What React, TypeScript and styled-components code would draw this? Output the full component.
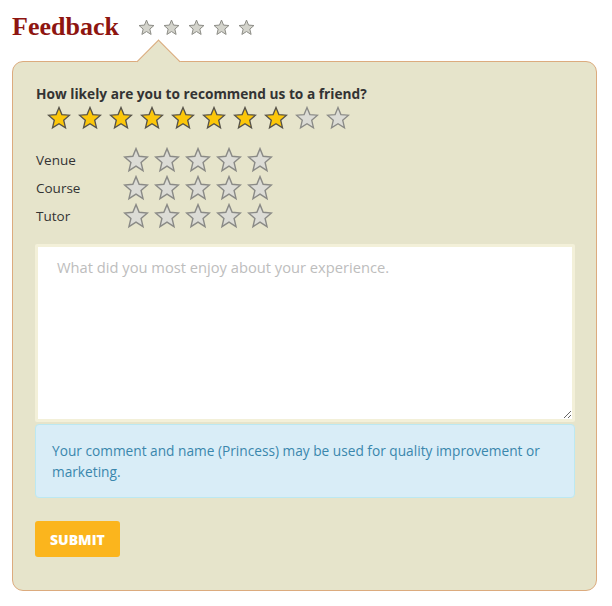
import React from "react";
import styled, { createGlobalStyle } from "styled-components";

const Global = createGlobalStyle`
  html, body { margin: 0; padding: 0; background: #ffffff; }
  body { font-family: "Open Sans", "Liberation Sans", sans-serif; color: #333; }
  * { box-sizing: border-box; }
`;

const Page = styled.div`
  width: 612px;
  padding: 8px 15px 0 12px;
`;

const Header = styled.div`
  display: flex;
  align-items: center;
  height: 38px;
  gap: 19px;
`;

const Title = styled.h1`
  margin: 0;
  font-family: "Liberation Serif", "DejaVu Serif", serif;
  font-weight: 700;
  font-size: 26px;
  color: #8e1510;
  line-height: 38px;
`;

const StarRow = styled.div<{ $gap: number; $pad?: number }>`
  display: flex;
  align-items: center;
  gap: ${(p) => p.$gap}px;
  padding-left: ${(p) => p.$pad ?? 0}px;
`;

const Panel = styled.div`
  position: relative;
  margin-top: 15px;
  background: #e6e4cb;
  border: 1px solid #dcab7e;
  border-radius: 11px;
  padding: 23px 21px 33px 22px;
  &::before {
    content: "";
    position: absolute;
    left: 130px;
    top: -16px;
    width: 30px;
    height: 30px;
    background: #e6e4cb;
    border-top: 1px solid #dcab7e;
    border-left: 1px solid #dcab7e;
    transform: rotate(45deg);
  }
`;

const Question = styled.div`
  font-weight: 700;
  font-size: 13.7px;
  line-height: 18px;
  color: #333;
  padding-left: 1px;
`;

const BigStars = styled(StarRow)`
  margin-top: 3px;
  height: 24px;
`;

const SubRatings = styled.div`
  margin-top: 16px;
  display: flex;
  flex-direction: column;
`;

const SubRow = styled.div`
  display: flex;
  align-items: center;
  height: 28px;
`;

const Label = styled.div`
  width: 88px;
  padding-left: 1px;
  font-size: 13.5px;
  color: #333;
`;

const Comment = styled.textarea`
  display: block;
  margin-top: 14px;
  width: 100%;
  height: 178px;
  resize: vertical;
  background: #ffffff;
  border: 3px solid #f3f0d9;
  border-radius: 2px;
  padding: 10px 19px;
  font-family: "Open Sans", "Liberation Sans", sans-serif;
  font-size: 14.7px;
  line-height: 20px;
  color: #333;
  outline: none;
  &::placeholder { color: #bdbdbd; }
`;

const Notice = styled.div`
  margin-top: 2px;
  background: #d9edf7;
  border: 1px solid #bce8f1;
  border-radius: 4px;
  padding: 15px 16px 15px 16px;
  font-size: 13.7px;
  line-height: 21px;
  color: #3a87ad;
`;

const Submit = styled.button`
  margin-top: 23px;
  display: block;
  height: 36px;
  padding: 0 15px;
  background: #fbb51d;
  border: none;
  border-radius: 3px;
  color: #fff;
  font-family: "Open Sans", "Liberation Sans", sans-serif;
  font-weight: 800;
  font-size: 14px;
  cursor: pointer;
`;

type StarKind = "gold" | "gray" | "mini";

const starColors: Record<StarKind, { fill: string; stroke: string; sw: number }> = {
  gold: { fill: "#fcc70a", stroke: "#55524a", sw: 1.3 },
  gray: { fill: "#dcdcd6", stroke: "#8a8a86", sw: 1.3 },
  mini: { fill: "#d4d4cc", stroke: "#8c8c86", sw: 1.4 },
};

const Star: React.FC<{ size: number; kind: StarKind }> = ({ size, kind }) => {
  const c = starColors[kind];
  return (
    <svg width={size} height={size} viewBox="0 0 24 24" style={{ display: "block" }}>
      <polygon
        points="12,1.5 14.9,8.6 22.5,9.2 16.7,14.2 18.5,21.8 12,17.7 5.5,21.8 7.3,14.2 1.5,9.2 9.1,8.6"
        fill={c.fill}
        stroke={c.stroke}
        strokeWidth={c.sw}
        strokeLinejoin="miter"
      />
    </svg>
  );
};

const Stars: React.FC<{ count: number; filled: number; size: number; gap: number; pad?: number; kind?: StarKind }> = ({
  count,
  filled,
  size,
  gap,
  pad,
  kind,
}) => (
  <StarRow $gap={gap} $pad={pad}>
    {Array.from({ length: count }).map((_, i) => (
      <Star key={i} size={size} kind={kind ?? (i < filled ? "gold" : "gray")} />
    ))}
  </StarRow>
);

export default function App() {
  return (
    <Page>
      <Global />
      <Header>
        <Title>Feedback</Title>
        <Stars count={5} filled={0} size={17} gap={8} kind="mini" />
      </Header>
      <Panel>
        <Question>How likely are you to recommend us to a friend?</Question>
        <BigStars $gap={7} $pad={12}>
          {Array.from({ length: 10 }).map((_, i) => (
            <Star key={i} size={24} kind={i < 8 ? "gold" : "gray"} />
          ))}
        </BigStars>
        <SubRatings>
          {["Venue", "Course", "Tutor"].map((l) => (
            <SubRow key={l}>
              <Label>{l}</Label>
              <Stars count={5} filled={0} size={26} gap={5} />
            </SubRow>
          ))}
        </SubRatings>
        <Comment placeholder="What did you most enjoy about your experience." />
        <Notice>Your comment and name (Princess) may be used for quality improvement or marketing.</Notice>
        <Submit>SUBMIT</Submit>
      </Panel>
    </Page>
  );
}
